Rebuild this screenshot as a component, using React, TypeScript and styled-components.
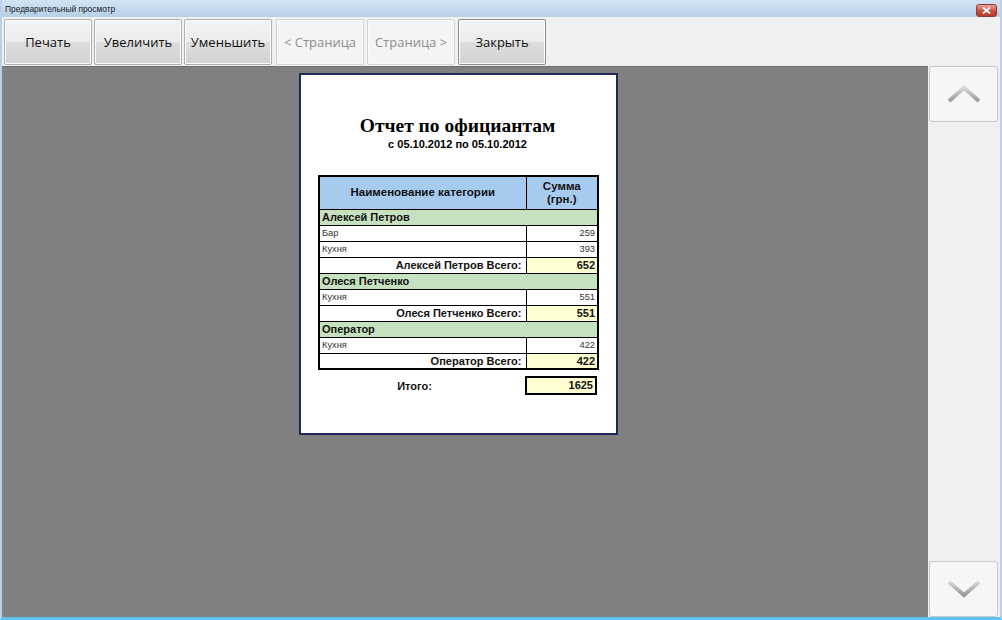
import React from "react";
import styled, { createGlobalStyle } from "styled-components";

const Global = createGlobalStyle`
  html, body { margin: 0; padding: 0; width: 1002px; height: 620px; overflow: hidden; }
  body { font-family: "Open Sans", "Noto Sans", sans-serif; }
  * { box-sizing: border-box; }
`;

const Window = styled.div`
  width: 1002px;
  height: 620px;
  display: flex;
  flex-direction: column;
  background: #f0f0f0;
  border-left: 2px solid #b9d1ea;
  border-right: 2px solid #b9d1ea;
  border-bottom: 3px solid #5fc3ee;
`;

const TitleBar = styled.div`
  height: 17px;
  display: flex;
  align-items: center;
  justify-content: space-between;
  padding: 0 3px 0 3px;
  background: linear-gradient(#d3e3f4, #b7cfe9);
  font-family: "Liberation Sans", Arial, sans-serif;
  font-size: 8.4px;
  color: #1a1a1a;
`;

const CloseBtn = styled.div`
  width: 21px;
  height: 13px;
  margin-top: 4px;
  border-radius: 3px;
  border: 1px solid #8c3a30;
  background: linear-gradient(#e8a395, #c9503f 55%, #b63a2a);
  display: flex;
  align-items: center;
  justify-content: center;
`;

const Toolbar = styled.div`
  height: 49px;
  display: flex;
  padding: 2px 0 0 2px;
  align-items: flex-start;
`;

const ToolButton = styled.button<{ $disabled?: boolean; $default?: boolean; $gap?: number }>`
  width: 88px;
  height: 46px;
  margin-left: ${(p) => p.$gap ?? 2}px;
  border-radius: 2px;
  border: 1px solid ${(p) => (p.$disabled ? "#d4d4d4" : p.$default ? "#8e8e8e" : "#b0b0b0")};
  background: ${(p) =>
    p.$disabled
      ? "#f4f4f4"
      : "linear-gradient(#f3f3f3 0%, #ebebeb 50%, #dddddd 51%, #d3d3d3 100%)"};
  font-family: "Open Sans", "Noto Sans", sans-serif;
  font-size: 13px;
  color: ${(p) => (p.$disabled ? "#8d8d8d" : "#111")};
  padding: 0;
  box-shadow: inset 0 0 0 1px ${(p) => (p.$disabled ? "#fafafa" : "#fbfbfb")};
`;

const Main = styled.div`
  flex: 1;
  display: flex;
  min-height: 0;
`;

const Canvas = styled.div`
  flex: 1;
  background: #808080;
  padding: 6px 0 0 297px;
  border-top: 1px solid #6f6f6f;
`;

const ScrollPanel = styled.div`
  width: 72px;
  display: flex;
  flex-direction: column;
  justify-content: space-between;
  padding: 0 0 0 1px;
`;

const ScrollButton = styled.div`
  width: 69px;
  height: 56px;
  border: 1px solid #c9c9c9;
  border-radius: 3px;
  background: #f6f6f6;
  display: flex;
  align-items: center;
  justify-content: center;
`;

const Page = styled.div`
  width: 319px;
  height: 362px;
  background: #fff;
  border: 2px solid #1d2b5a;
  padding: 40px 0 0 17px;
`;

const ReportTitle = styled.div`
  width: 279px;
  text-align: center;
  font-family: "Liberation Serif", "Times New Roman", serif;
  font-weight: bold;
  font-size: 19.5px;
  line-height: 22px;
  color: #000;
`;

const SubTitle = styled.div`
  width: 279px;
  text-align: center;
  font-family: "Liberation Sans", Arial, sans-serif;
  font-weight: bold;
  font-size: 11px;
  line-height: 14px;
  margin-bottom: 24px;
  color: #000;
`;

const Table = styled.table`
  border-collapse: collapse;
  width: 279px;
  border: 2px solid #000;
  font-family: "Liberation Sans", Arial, sans-serif;
  table-layout: fixed;
`;

const HeadCell = styled.th`
  background: #a7caef;
  border: 1px solid #000;
  font-size: 11.5px;
  font-weight: bold;
  height: 33px;
  line-height: 13px;
  padding: 0;
  color: #111;
`;

const GroupCell = styled.td`
  background: #c5e1c0;
  border: 1px solid #000;
  font-size: 11px;
  font-weight: bold;
  height: 16px;
  padding: 0 2px;
  line-height: 14px;
  color: #111;
`;

const DetailCell = styled.td<{ $num?: boolean }>`
  border: 1px solid #000;
  font-size: 9.3px;
  height: 16px;
  padding: 0 2px;
  line-height: 14px;
  text-align: ${(p) => (p.$num ? "right" : "left")};
  color: #333;
`;

const TotalLabel = styled.td`
  border: 1px solid #000;
  font-size: 11px;
  font-weight: bold;
  height: 16px;
  padding: 0 4px;
  line-height: 14px;
  text-align: right;
  color: #111;
`;

const TotalValue = styled.td`
  border: 1px solid #000;
  background: #fefed2;
  font-size: 11px;
  font-weight: bold;
  height: 16px;
  padding: 0 2px;
  line-height: 14px;
  text-align: right;
  color: #111;
`;

const GrandRow = styled.div`
  display: grid;
  grid-template-columns: 207px 72px;
  align-items: center;
  margin-top: 6px;
  font-family: "Liberation Sans", Arial, sans-serif;
  font-size: 11px;
  font-weight: bold;
  color: #111;
`;

const GrandLabel = styled.div`
  text-align: center;
  padding-right: 14px;
`;

const GrandValue = styled.div`
  height: 19px;
  border: 2px solid #000;
  background: #fefed2;
  text-align: right;
  padding: 0 2px;
  line-height: 15px;
`;

const Chevron = ({ up }: { up?: boolean }) => (
  <svg width="36" height="20" viewBox="0 0 36 20">
    <defs>
      <linearGradient id={up ? "cu" : "cd"} x1="0" y1="0" x2="0" y2="1">
        <stop offset="0" stopColor="#d6d6d6" />
        <stop offset="1" stopColor="#9a9a9a" />
      </linearGradient>
    </defs>
    <polyline
      points={up ? "3,17 18,4 33,17" : "3,3 18,16 33,3"}
      fill="none"
      stroke={`url(#${up ? "cu" : "cd"})`}
      strokeWidth="4"
      strokeLinejoin="miter"
    />
  </svg>
);

type Group = { name: string; items: [string, number][]; total: number };

const groups: Group[] = [
  { name: "Алексей Петров", items: [["Бар", 259], ["Кухня", 393]], total: 652 },
  { name: "Олеся Петченко", items: [["Кухня", 551]], total: 551 },
  { name: "Оператор", items: [["Кухня", 422]], total: 422 },
];

export default function App() {
  return (
    <>
      <Global />
      <Window>
        <TitleBar>
          <span>Предварительный просмотр</span>
          <CloseBtn>
            <svg width="9" height="7" viewBox="0 0 9 7">
              <path d="M1 0.5 L8 6.5 M8 0.5 L1 6.5" stroke="#fff" strokeWidth="1.8" />
            </svg>
          </CloseBtn>
        </TitleBar>
        <Toolbar>
          <ToolButton $gap={0}>Печать</ToolButton>
          <ToolButton>Увеличить</ToolButton>
          <ToolButton>Уменьшить</ToolButton>
          <ToolButton $disabled $gap={4}>&lt; Страница</ToolButton>
          <ToolButton $disabled $gap={3}>Страница &gt;</ToolButton>
          <ToolButton $default $gap={3}>Закрыть</ToolButton>
        </Toolbar>
        <Main>
          <Canvas>
            <Page>
              <ReportTitle>Отчет по официантам</ReportTitle>
              <SubTitle>с 05.10.2012 по 05.10.2012</SubTitle>
              <Table>
                <colgroup>
                  <col width={207} />
                  <col width={72} />
                </colgroup>
                <thead>
                  <tr>
                    <HeadCell>Наименование категории</HeadCell>
                    <HeadCell>
                      Сумма
                      <br />
                      (грн.)
                    </HeadCell>
                  </tr>
                </thead>
                <tbody>
                  {groups.map((g) => (
                    <React.Fragment key={g.name}>
                      <tr>
                        <GroupCell colSpan={2}>{g.name}</GroupCell>
                      </tr>
                      {g.items.map(([n, v]) => (
                        <tr key={n}>
                          <DetailCell>{n}</DetailCell>
                          <DetailCell $num>{v}</DetailCell>
                        </tr>
                      ))}
                      <tr>
                        <TotalLabel>{g.name} Всего:</TotalLabel>
                        <TotalValue>{g.total}</TotalValue>
                      </tr>
                    </React.Fragment>
                  ))}
                </tbody>
              </Table>
              <GrandRow>
                <GrandLabel>Итого:</GrandLabel>
                <GrandValue>1625</GrandValue>
              </GrandRow>
            </Page>
          </Canvas>
          <ScrollPanel>
            <ScrollButton>
              <Chevron up />
            </ScrollButton>
            <ScrollButton>
              <Chevron />
            </ScrollButton>
          </ScrollPanel>
        </Main>
      </Window>
    </>
  );
}
